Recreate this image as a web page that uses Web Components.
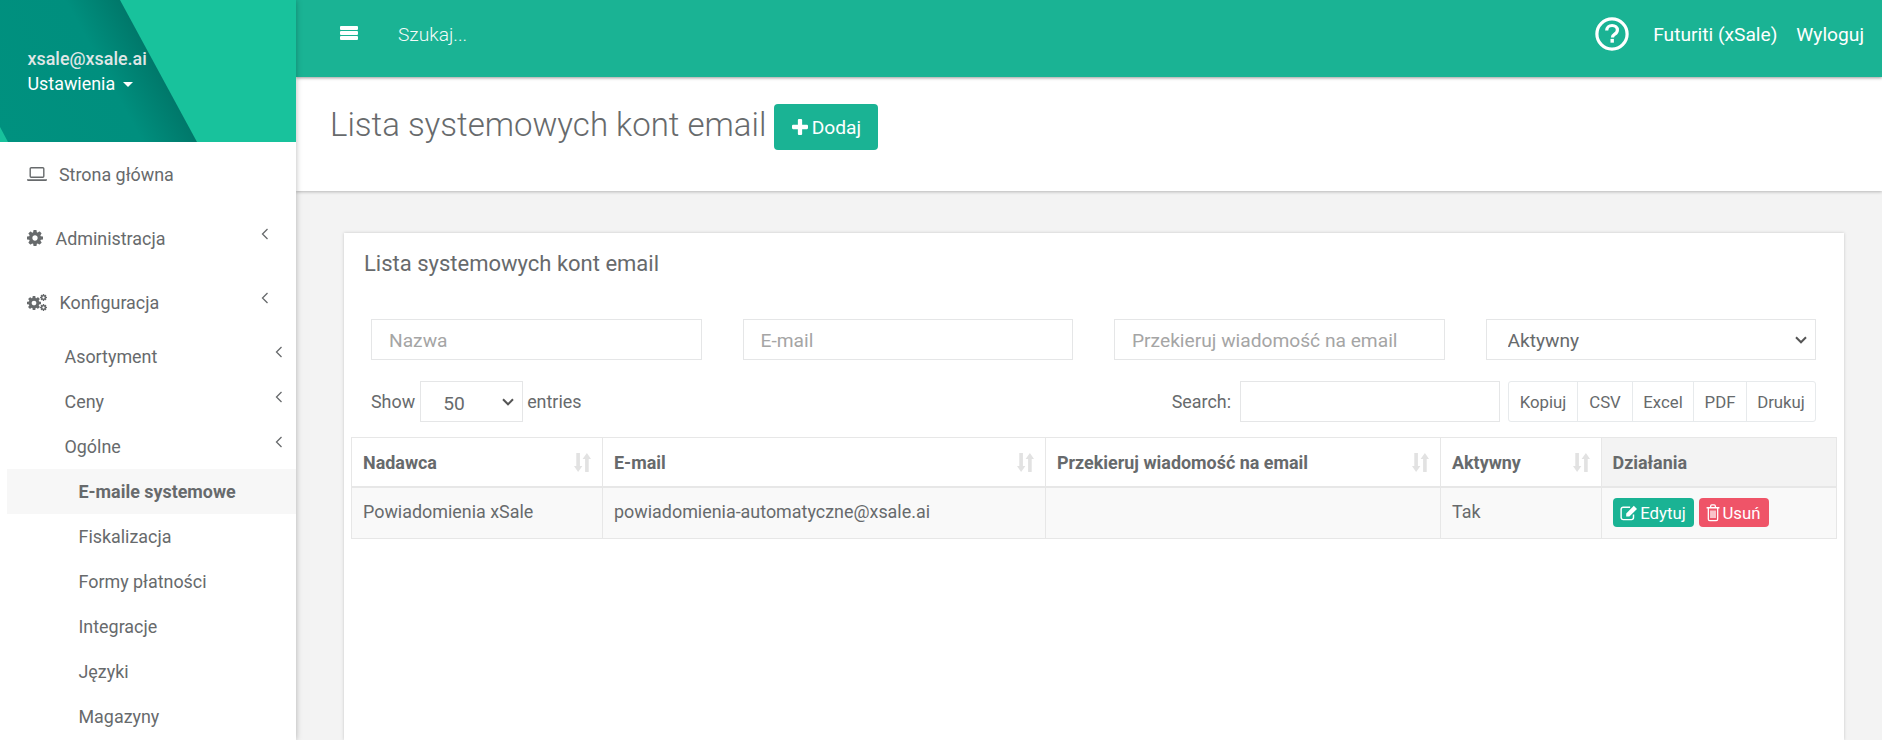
<!DOCTYPE html>
<html lang="pl">
<head>
<meta charset="utf-8">
<title>Lista systemowych kont email</title>
<style>
  html, body { margin: 0; height: 740px; overflow: hidden; }
  body { font-family: Roboto, "Liberation Sans", sans-serif; font-size: 17.9px; color: #676a6c; background: #f3f3f3; }
  app-shell { height: 740px; }
</style>
</head>
<body>
<app-shell>
  <side-bar slot="side">
    <nav-item icon="laptop" gap="12">Strona główna</nav-item>
    <nav-item icon="cog" gap="12.5" arrow>Administracja</nav-item>
    <nav-item icon="cogs" gap="12.5" arrow>Konfiguracja</nav-item>
    <nav-item level="1" arrow>Asortyment</nav-item>
    <nav-item level="1" arrow>Ceny</nav-item>
    <nav-item level="1" arrow>Ogólne</nav-item>
    <nav-item level="2" active>E-maile systemowe</nav-item>
    <nav-item level="2">Fiskalizacja</nav-item>
    <nav-item level="2">Formy płatności</nav-item>
    <nav-item level="2">Integracje</nav-item>
    <nav-item level="2">Języki</nav-item>
    <nav-item level="2">Magazyny</nav-item>
  </side-bar>
  <top-bar></top-bar>
  <page-heading>Lista systemowych kont email</page-heading>
  <list-card heading="Lista systemowych kont email">
    <filter-row></filter-row>
    <table-tools></table-tools>
    <accounts-table></accounts-table>
  </list-card>
</app-shell>

<script>
// font awesome 4 cog, used alone and for the cogs group
const COG = "M1152 896q0-106-75-181t-181-75-181 75-75 181 75 181 181 75 181-75 75-181zm512-109v222q0 12-8 23t-20 13l-185 28q-19 54-39 91 35 50 107 138 10 12 10 25t-9 23q-27 37-99 108t-94 71q-12 0-26-9l-138-108q-44 23-91 38-16 136-29 186-7 28-36 28h-222q-14 0-24.5-8.5t-11.5-21.5l-28-184q-49-16-90-37l-141 107q-10 9-25 9-14 0-25-11-126-114-165-168-7-10-7-23 0-12 8-23 15-21 51-66.5t54-70.5q-27-50-41-99l-183-27q-13-2-21-12.5t-8-23.5v-222q0-12 8-23t19-13l186-28q14-46 39-92-40-57-107-138-10-12-10-24 0-10 9-23 26-36 98.5-107.5t94.5-71.5q13 0 26 10l138 107q44-23 91-38 16-136 29-186 7-28 36-28h222q14 0 24.5 8.5t11.5 21.5l28 184q49 16 90 37l142-107q9-9 24-9 13 0 25 10 129 119 165 170 7 8 7 22 0 12-8 23-15 21-51 66.5t-54 70.5q26 50 41 98l183 28q13 2 21 12.5t8 23.5z";
const COG_BOX = "128 128 1536 1536";

const ICONS = {
  laptop: [20, 16, `<rect x="3.2" y="1.7" width="13.6" height="9.6" rx="1" fill="none" stroke="currentColor" stroke-width="1.4"/><path d="M0 13.2h20v.6q0 1.2-1.2 1.2H1.2Q0 15 0 13.8z" fill="currentColor"/>`],
  cog: [16, 16, `<svg viewBox="${COG_BOX}" width="16" height="16"><path d="${COG}" fill="currentColor"/></svg>`],
  cogs: [20, 17, `<svg x="0" y="2" viewBox="${COG_BOX}" width="14" height="14"><path d="${COG}" fill="currentColor"/></svg>
    <svg x="13" y="0" viewBox="${COG_BOX}" width="7" height="7"><path d="${COG}" fill="currentColor"/></svg>
    <svg x="13" y="10" viewBox="${COG_BOX}" width="7" height="7"><path d="${COG}" fill="currentColor"/></svg>`],
  left: [8, 12, `<path d="M6.500 1L1.500 6l5 5" fill="none" stroke="currentColor" stroke-width="1.300"/>`],
  bars: [18, 14, `<path d="M1 0h16a1 1 0 0 1 1 1v2a1 1 0 0 1-1 1H1a1 1 0 0 1-1-1V1a1 1 0 0 1 1-1zm0 5h16a1 1 0 0 1 1 1v2a1 1 0 0 1-1 1H1a1 1 0 0 1-1-1V6a1 1 0 0 1 1-1zm0 5h16a1 1 0 0 1 1 1v2a1 1 0 0 1-1 1H1a1 1 0 0 1-1-1v-2a1 1 0 0 1 1-1z" fill="currentColor"/>`],
  help: [36, 36, `<circle cx="18" cy="18" r="16" fill="none" stroke="currentColor" stroke-width="3.400"/><path d="M12.400 14.400c0-3.400 2.400-5.400 5.700-5.400 3.200 0 5.600 1.900 5.600 4.800 0 2.300-1.200 3.400-2.800 4.400-1.600 1-2.400 1.700-2.400 3.600" fill="none" stroke="currentColor" stroke-width="3.400"/><rect x="16.400" y="23.200" width="3.600" height="4" fill="currentColor"/>`],
  plus: [15, 15, `<path d="M5.500 1a1 1 0 0 1 1-1h2a1 1 0 0 1 1 1v4.500H14a1 1 0 0 1 1 1v2a1 1 0 0 1-1 1H9.500V14a1 1 0 0 1-1 1h-2a1 1 0 0 1-1-1V9.500H1a1 1 0 0 1-1-1v-2a1 1 0 0 1 1-1h4.500z" fill="currentColor"/>`],
  edit: [16, 14, `<path d="M12 8.500v2.700A1.800 1.800 0 0 1 10.200 13H2.800A1.800 1.800 0 0 1 1 11.200V3.800A1.800 1.800 0 0 1 2.800 2h6.200" fill="none" stroke="currentColor" stroke-width="1.300"/><path d="M5.500 7.500L12.300 .7l2.800 2.800-6.800 6.800H5.500z" fill="currentColor"/>`],
  trash: [12, 15, `<path d="M.5 3.200h11M4 3V1.800Q4 .8 5 .8h2q1 0 1 1V3M2 3.500v9.500q0 1.200 1.200 1.200h5.600Q10 14.200 10 13V3.500M4.300 5.500v6.500M6 5.500v6.500M7.700 5.500v6.500" fill="none" stroke="currentColor" stroke-width="1.100"/>`],
  sort: [17, 19, `<path d="M2.300 0h3.600v13h2.500l-4.300 6L0 13h2.300zM11.100 19h3.600V6H17L12.900 0 8.600 6h2.500z" fill="currentColor"/>`]
};

const CHEVRON = `url("data:image/svg+xml,%3Csvg xmlns='http://www.w3.org/2000/svg' width='12' height='8'%3E%3Cpath d='M1 1.300l5 5 5-5' fill='none' stroke='%23555' stroke-width='2'/%3E%3C/svg%3E")`;

class FaIcon extends HTMLElement {
  constructor() {
    super();
    this.attachShadow({ mode: "open" });
  }
  connectedCallback() {
    const [w, h, body] = ICONS[this.getAttribute("name")];
    const size = this.getAttribute("size");
    const width = size ? +size : w;
    const height = width * h / w;
    this.shadowRoot.innerHTML = `
      <style>:host { display: inline-flex; flex: none; } svg { display: block; }</style>
      <svg viewBox="0 0 ${w} ${h}" width="${width}" height="${height}">${body}</svg>`;
  }
}
customElements.define("fa-icon", FaIcon);

const shellTemplate = document.createElement("template");
shellTemplate.innerHTML = `
  <style>
    :host { display: flex; }
    .main { flex: 1; min-width: 0; display: flex; flex-direction: column; }
    ::slotted(side-bar) { flex: none; }
  </style>
  <slot name="side"></slot>
  <div class="main"><slot></slot></div>`;
class AppShell extends HTMLElement {
  constructor() {
    super();
    this.attachShadow({ mode: "open" }).appendChild(shellTemplate.content.cloneNode(true));
  }
}
customElements.define("app-shell", AppShell);

const sideTemplate = document.createElement("template");
sideTemplate.innerHTML = `
  <style>
    :host { display: block; width: 296px; height: 740px; overflow: hidden; background: #fff; box-shadow: 0 0 6px rgba(0,0,0,.28); position: relative; z-index: 2; }
    .profile { height: 142px; box-sizing: border-box; padding: 46px 0 0 27.5px; background: #18c29c; position: relative; color: #fff; }
    .profile::before { content: ""; position: absolute; left: 0; top: 0; width: 197px; height: 142px;
      background: linear-gradient(61.5deg, #00917f 0%, #008f7e 52%, #00786a 72%);
      clip-path: polygon(0 0, 120px 0, 197px 142px, 8px 142px, 0 127px); }
    .mail, .settings { position: relative; line-height: 25px; height: 25px; display: flex; align-items: center; }
    .mail { font-weight: 500; color: #dfe6e6; }
    .caret { width: 0; height: 0; border: 5px solid transparent; border-top-color: #fff; border-bottom: 0; margin-left: 8px; margin-top: 2px; }
  </style>
  <div class="profile">
    <div class="mail">xsale@xsale.ai</div>
    <div class="settings">Ustawienia<span class="caret"></span></div>
  </div>
  <slot></slot>`;
class SideBar extends HTMLElement {
  constructor() {
    super();
    this.attachShadow({ mode: "open" }).appendChild(sideTemplate.content.cloneNode(true));
  }
}
customElements.define("side-bar", SideBar);

const navTemplate = document.createElement("template");
navTemplate.innerHTML = `
  <style>
    :host { display: flex; align-items: center; height: 64px; padding-left: 27px; color: #676a6c; }
    :host([level="1"]) { height: 45px; padding-left: 64.5px; }
    :host([level="2"]) { height: 45px; padding-left: 78.5px; }
    :host([active]) { margin-left: 7px; padding-left: 71.5px; background: #f7f7f7; font-weight: 700; }
    .label { flex: 1; }
    .arrow { display: none; margin: -9px 27px 0 0; color: #676a6c; }
    :host([level="1"]) .arrow { margin-right: 13px; }
    :host([arrow]) .arrow { display: block; }
  </style>
  <span class="ico"></span>
  <span class="label"><slot></slot></span>
  <fa-icon class="arrow" name="left"></fa-icon>`;
class NavItem extends HTMLElement {
  constructor() {
    super();
    this.attachShadow({ mode: "open" }).appendChild(navTemplate.content.cloneNode(true));
  }
  connectedCallback() {
    const ico = this.shadowRoot.querySelector(".ico");
    if (this.hasAttribute("icon")) {
      ico.innerHTML = `<fa-icon name="${this.getAttribute("icon")}"></fa-icon>`;
      ico.style.cssText = `display:flex;margin-right:${this.getAttribute("gap")}px`;
    }
  }
}
customElements.define("nav-item", NavItem);

const topTemplate = document.createElement("template");
topTemplate.innerHTML = `
  <style>
    :host { display: flex; align-items: center; flex: none; height: 77px; box-sizing: border-box; padding: 0 18px 9px 44px; background: #1ab394; color: #fff; box-shadow: 0 1px 3px rgba(0,0,0,.4); position: relative; z-index: 1; }
    .bars { margin: -3px 0 0 0; }
    .search { margin-left: 40px; font-size: 19.2px; font-weight: 300; flex: 1; color: #f4fbfa; }
    .help { margin-right: 24px; }
    .link { font-size: 19.2px; font-weight: 400; }
    .link + .link { margin-left: 19px; }
  </style>
  <fa-icon class="bars" name="bars"></fa-icon>
  <span class="search">Szukaj...</span>
  <fa-icon class="help" name="help" size="34"></fa-icon>
  <span class="link">Futuriti (xSale)</span>
  <span class="link">Wyloguj</span>`;
class TopBar extends HTMLElement {
  constructor() {
    super();
    this.attachShadow({ mode: "open" }).appendChild(topTemplate.content.cloneNode(true));
  }
}
customElements.define("top-bar", TopBar);

const headingTemplate = document.createElement("template");
headingTemplate.innerHTML = `
  <style>
    :host { display: flex; align-items: flex-start; flex: none; height: 114px; box-sizing: border-box; padding: 27px 0 0 34px; background: #fff; box-shadow: 0 1px 3px rgba(0,0,0,.25); }
    h1 { margin: 0; font-size: 33px; line-height: 42px; font-weight: 300; color: #676a6c; }
    .add { display: flex; align-items: center; gap: 4px; justify-content: center; width: 104px; height: 46px; margin-left: 8px; background: #1ab394; color: #fff; border-radius: 4px; font-size: 19.2px; font-weight: 400; }
  </style>
  <h1><slot></slot></h1>
  <span class="add"><fa-icon name="plus" size="16"></fa-icon>Dodaj</span>`;
class PageHeading extends HTMLElement {
  constructor() {
    super();
    this.attachShadow({ mode: "open" }).appendChild(headingTemplate.content.cloneNode(true));
  }
}
customElements.define("page-heading", PageHeading);

const cardTemplate = document.createElement("template");
cardTemplate.innerHTML = `
  <style>
    :host { display: block; flex: 1; margin: 42px 38px 0 48px; background: #fff; box-shadow: 0 0 3px rgba(0,0,0,.18); }
    h2 { margin: 0; padding: 19px 0 0 20px; font-size: 22px; line-height: 24px; font-weight: 400; color: #676a6c; }
  </style>
  <h2></h2>
  <slot></slot>`;
class ListCard extends HTMLElement {
  constructor() {
    super();
    this.attachShadow({ mode: "open" }).appendChild(cardTemplate.content.cloneNode(true));
  }
  connectedCallback() {
    this.shadowRoot.querySelector("h2").textContent = this.getAttribute("heading");
  }
}
customElements.define("list-card", ListCard);

const filterTemplate = document.createElement("template");
filterTemplate.innerHTML = `
  <style>
    :host { display: grid; grid-template-columns: repeat(4, minmax(0, 1fr)); gap: 41px; margin: 43px 28px 0 27px; }
    .field { box-sizing: border-box; height: 41px; border: 1px solid #e5e6e7; color: #a5a5a5; font-size: 19.2px; display: flex; align-items: center; padding: 1px 0 0 17px; }
    select { appearance: none; box-sizing: border-box; width: 100%; height: 41px; padding: 2px 0 0 21px; border: 1px solid #e5e6e7; color: #676a6c; font: 19.2px Roboto, sans-serif; background: #fff ${CHEVRON} no-repeat right 8px center; border-radius: 0; outline: none; }
  </style>
  <div class="field">Nazwa</div>
  <div class="field">E-mail</div>
  <div class="field">Przekieruj wiadomość na email</div>
  <select><option>Aktywny</option></select>`;
class FilterRow extends HTMLElement {
  constructor() {
    super();
    this.attachShadow({ mode: "open" }).appendChild(filterTemplate.content.cloneNode(true));
  }
}
customElements.define("filter-row", FilterRow);

const toolsTemplate = document.createElement("template");
toolsTemplate.innerHTML = `
  <style>
    :host { display: flex; align-items: center; margin: 21px 28px 0 27px; height: 41px; }
    select { appearance: none; box-sizing: border-box; width: 103px; height: 41px; margin: 0 4px 0 5px; padding: 3px 0 0 22px; border: 1px solid #e5e6e7; color: #676a6c; font: 19.2px Roboto, sans-serif; background: #fff ${CHEVRON} no-repeat right 8px center; border-radius: 0; outline: none; }
    .search { margin-left: auto; }
    .box { box-sizing: border-box; width: 260px; height: 41px; margin: 0 8px 0 9px; border: 1px solid #e5e6e7; }
    .btns { display: flex; height: 41px; box-sizing: border-box; border: 1px solid #e7eaec; border-radius: 3px; font-size: 16.8px; }
    .btns span { display: flex; align-items: center; justify-content: center; border-left: 1px solid #e7eaec; }
    .btns span:first-child { border-left: 0; width: 68px; }
  </style>
  <span>Show</span><select><option>50</option></select><span>entries</span>
  <span class="search">Search:</span><div class="box"></div>
  <div class="btns">
    <span>Kopiuj</span>
    <span style="width:54px">CSV</span>
    <span style="width:60px">Excel</span>
    <span style="width:52px">PDF</span>
    <span style="width:68px">Drukuj</span>
  </div>`;
class TableTools extends HTMLElement {
  constructor() {
    super();
    this.attachShadow({ mode: "open" }).appendChild(toolsTemplate.content.cloneNode(true));
  }
}
customElements.define("table-tools", TableTools);

const tableTemplate = document.createElement("template");
tableTemplate.innerHTML = `
  <style>
    :host { display: block; margin: 15px 7px 0 7px; }
    table { width: 100%; table-layout: fixed; border-collapse: collapse; font-size: 17.92px; color: #676a6c; }
    th, td { border: 1px solid #e7e7e7; padding: 0 11px; text-align: left; }
    th { height: 48px; font-weight: 700; background: #fff; position: relative; border-bottom-width: 2px; }
    th fa-icon { position: absolute; right: 11px; top: 15px; color: #e2e2e2; }
    th.plain { background: #f3f3f3; }
    td { height: 51px; background: #f9f9f9; padding-bottom: 3px; box-sizing: border-box; }
    .act { display: flex; gap: 5px; margin-top: 3px; }
    .btn { display: flex; align-items: center; justify-content: center; gap: 2px; height: 29px; border-radius: 4px; color: #fff; font-size: 16.8px; font-weight: 400; }
    .edit { width: 81px; background: #1ab394; }
    .del { width: 70px; background: #ef5468; }
  </style>
  <table>
    <colgroup><col style="width:251px"><col style="width:443px"><col style="width:395px"><col style="width:160.500px"><col></colgroup>
    <thead><tr>
      <th>Nadawca<fa-icon name="sort"></fa-icon></th>
      <th>E-mail<fa-icon name="sort"></fa-icon></th>
      <th>Przekieruj wiadomość na email<fa-icon name="sort"></fa-icon></th>
      <th>Aktywny<fa-icon name="sort"></fa-icon></th>
      <th class="plain">Działania</th>
    </tr></thead>
    <tbody><tr>
      <td>Powiadomienia xSale</td>
      <td>powiadomienia-automatyczne@xsale.ai</td>
      <td></td>
      <td>Tak</td>
      <td><div class="act">
        <span class="btn edit"><fa-icon name="edit" size="18"></fa-icon>Edytuj</span>
        <span class="btn del"><fa-icon name="trash" size="14"></fa-icon>Usuń</span>
      </div></td>
    </tr></tbody>
  </table>`;
class AccountsTable extends HTMLElement {
  constructor() {
    super();
    this.attachShadow({ mode: "open" }).appendChild(tableTemplate.content.cloneNode(true));
  }
}
customElements.define("accounts-table", AccountsTable);
</script>
</body>
</html>
